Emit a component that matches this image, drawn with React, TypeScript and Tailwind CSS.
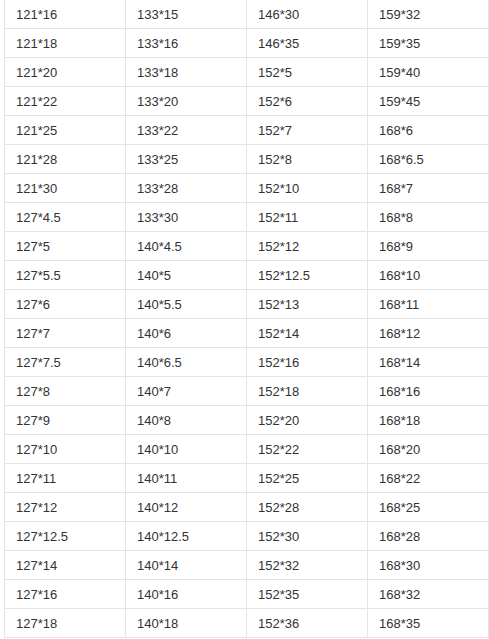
const rows: string[][] = [
  ["121*16", "133*15", "146*30", "159*32"],
  ["121*18", "133*16", "146*35", "159*35"],
  ["121*20", "133*18", "152*5", "159*40"],
  ["121*22", "133*20", "152*6", "159*45"],
  ["121*25", "133*22", "152*7", "168*6"],
  ["121*28", "133*25", "152*8", "168*6.5"],
  ["121*30", "133*28", "152*10", "168*7"],
  ["127*4.5", "133*30", "152*11", "168*8"],
  ["127*5", "140*4.5", "152*12", "168*9"],
  ["127*5.5", "140*5", "152*12.5", "168*10"],
  ["127*6", "140*5.5", "152*13", "168*11"],
  ["127*7", "140*6", "152*14", "168*12"],
  ["127*7.5", "140*6.5", "152*16", "168*14"],
  ["127*8", "140*7", "152*18", "168*16"],
  ["127*9", "140*8", "152*20", "168*18"],
  ["127*10", "140*10", "152*22", "168*20"],
  ["127*11", "140*11", "152*25", "168*22"],
  ["127*12", "140*12", "152*28", "168*25"],
  ["127*12.5", "140*12.5", "152*30", "168*28"],
  ["127*14", "140*14", "152*32", "168*30"],
  ["127*16", "140*16", "152*35", "168*32"],
  ["127*18", "140*18", "152*36", "168*35"],
];

export default function App() {
  return (
    <div className="w-[489px] h-[639px] overflow-hidden bg-white">
      <div className="ml-[4px] grid grid-cols-[121px_121px_121px_122px] font-['Liberation_Sans',Arial,sans-serif] text-[13px] text-[#333333]">
        {rows.map((row, i) =>
          row.map((cell, j) => (
            <div
              key={i + "-" + j}
              className={
                "h-[29px] flex items-center pl-[11px] pt-[2px] border-l border-b border-[#e4e4e4]" +
                (j === 3 ? " border-r" : "")
              }
            >
              {cell}
            </div>
          ))
        )}
      </div>
    </div>
  );
}
